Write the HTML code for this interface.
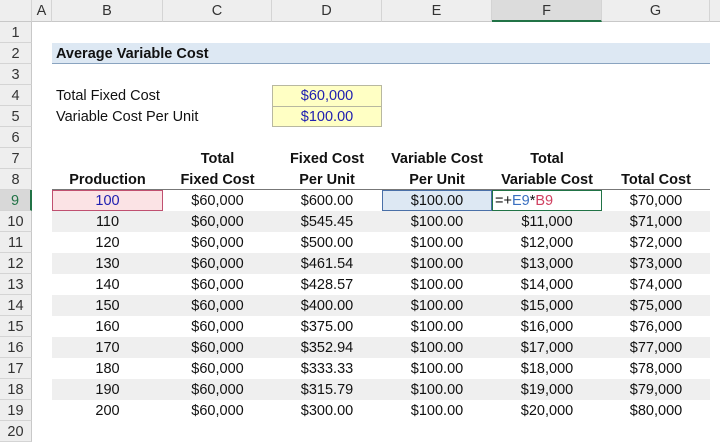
<!DOCTYPE html><html><head><style>
body{margin:0;width:720px;height:448px;overflow:hidden;background:#fff;font-family:"Liberation Sans",Arial,sans-serif;font-size:14.5px;color:#111;position:relative}
.a{position:absolute;box-sizing:border-box}
.ch{top:0;height:22px;background:#eeeeee;border-right:1px solid #d4d4d4;border-bottom:1px solid #c8c8c8;text-align:center;line-height:23px;color:#333;font-size:14.5px}
.rh{left:0;width:32px;height:21px;background:#eeeeee;border-bottom:1px solid #d4d4d4;border-right:1px solid #c8c8c8;text-align:center;line-height:23px;color:#333}
.c{height:21px;line-height:23px;text-align:center;white-space:nowrap}
.band{left:52px;width:658px;height:21px;background:#efefef}
b{font-weight:bold}
</style></head><body>
<div class="a ch" style="left:0;width:32px"></div>
<div class="a ch" style="left:32px;width:20px">A</div>
<div class="a ch" style="left:52px;width:111px">B</div>
<div class="a ch" style="left:163px;width:109px">C</div>
<div class="a ch" style="left:272px;width:110px">D</div>
<div class="a ch" style="left:382px;width:110px">E</div>
<div class="a ch" style="left:492px;width:110px;background:#dcdcdc;border-bottom:2px solid #217346">F</div>
<div class="a ch" style="left:602px;width:108px">G</div>
<div class="a ch" style="left:710px;width:10px;border-right:0"></div>
<div id="rows"></div>
<div class="a" style="left:52px;top:43px;width:658px;height:21px;background:#dde8f3;border-bottom:1px solid #8aa4c0"></div>
<div class="a c" style="left:56px;top:43px;text-align:left"><b>Average Variable Cost</b></div>
<div class="a c" style="left:56px;top:85px;text-align:left">Total Fixed Cost</div>
<div class="a c" style="left:56px;top:106px;text-align:left">Variable Cost Per Unit</div>
<div class="a c" style="left:272px;top:85px;width:110px;height:42px;background:#ffffc4;border:1px solid #b8b8a0"></div>
<div class="a" style="left:272px;top:106px;width:110px;border-top:1px solid #b8b8a0"></div>
<div class="a c" style="left:272px;top:85px;width:110px;color:#2020b0">$60,000</div>
<div class="a c" style="left:272px;top:106px;width:110px;color:#2020b0">$100.00</div>
<div class="a c" style="left:163px;top:148px;width:109px"><b>Total</b></div>
<div class="a c" style="left:272px;top:148px;width:110px"><b>Fixed Cost</b></div>
<div class="a c" style="left:382px;top:148px;width:110px"><b>Variable Cost</b></div>
<div class="a c" style="left:492px;top:148px;width:110px"><b>Total</b></div>
<div class="a c" style="left:52px;top:169px;width:111px"><b>Production</b></div>
<div class="a c" style="left:163px;top:169px;width:109px"><b>Fixed Cost</b></div>
<div class="a c" style="left:272px;top:169px;width:110px"><b>Per Unit</b></div>
<div class="a c" style="left:382px;top:169px;width:110px"><b>Per Unit</b></div>
<div class="a c" style="left:492px;top:169px;width:110px"><b>Variable Cost</b></div>
<div class="a c" style="left:602px;top:169px;width:108px"><b>Total Cost</b></div>
<div class="a" style="left:52px;top:189px;width:658px;border-top:1px solid #777"></div>
<div id="data"></div>
<script>
var r='';for(var i=1;i<=20;i++){var t=22+(i-1)*21;r+='<div class="a rh" style="top:'+t+'px;'+(i==9?'background:#d8d8d8;color:#217346;border-right:2px solid #217346':'')+'">'+i+'</div>';}
document.getElementById('rows').innerHTML=r;
var d='',fp=['600.00','545.45','500.00','461.54','428.57','400.00','375.00','352.94','333.33','315.79','300.00'];
for(var k=0;k<11;k++){var t=190+k*21;if(k%2==1)d+='<div class="a band" style="top:'+t+'px"></div>';
var p=100+k*10;
d+='<div class="a c" style="left:52px;top:'+t+'px;width:111px;'+(k==0?'color:#2020b0;background:#fbe3e5;border:1px solid #c05070;line-height:21px':'')+'">'+p+'</div>';
d+='<div class="a c" style="left:163px;top:'+t+'px;width:109px">$60,000</div>';
d+='<div class="a c" style="left:272px;top:'+t+'px;width:110px">$'+fp[k]+'</div>';
d+='<div class="a c" style="left:382px;top:'+t+'px;width:110px;'+(k==0?'background:#dde8f3;border:1px solid #4a70a8;line-height:21px':'')+'">$100.00</div>';
if(k==0)d+='<div class="a c" style="left:492px;top:'+t+'px;width:110px;border:1px solid #217346;text-align:left;padding-left:2px;line-height:21px">=+<span style="color:#3a6fc0">E9</span>*<span style="color:#d04060">B9</span></div>';
else d+='<div class="a c" style="left:492px;top:'+t+'px;width:110px">$'+(10+k)+',000</div>';
d+='<div class="a c" style="left:602px;top:'+t+'px;width:108px">$'+(70+k)+',000</div>';}
document.getElementById('data').innerHTML=d;
</script>
</body></html>
